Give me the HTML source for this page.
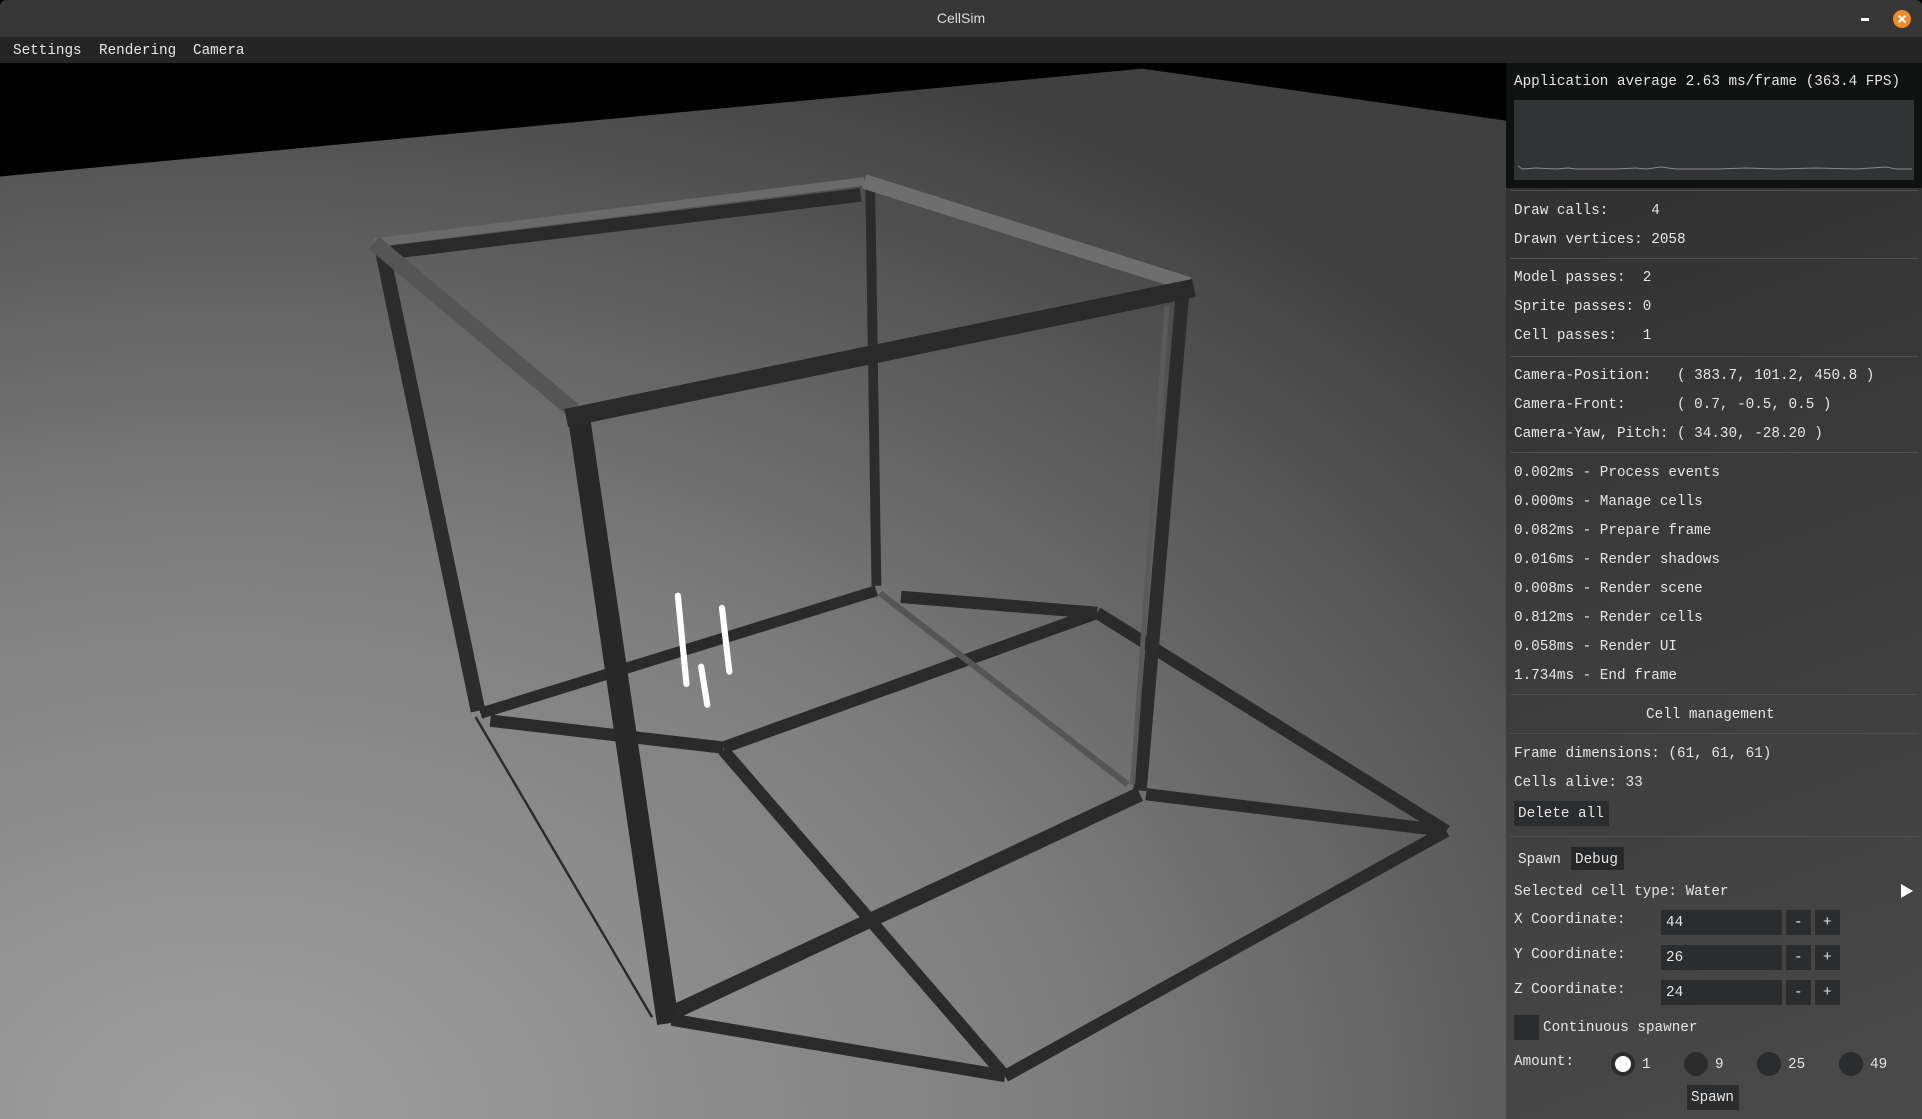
<!DOCTYPE html>
<html><head><meta charset="utf-8"><style>
*{margin:0;padding:0;box-sizing:border-box}
body{width:1922px;height:1119px;overflow:hidden;background:#000;font-family:"Liberation Mono","DejaVu Sans Mono",monospace;color:#e6e6e6;position:relative}
#title{position:absolute;left:0;top:0;width:1922px;height:37px;background:#363636;border-radius:6px 6px 0 0;text-align:center;line-height:37px;font-family:"Liberation Sans",sans-serif;font-size:14px;color:#ddd}
#menu{position:absolute;left:0;top:37px;width:1922px;height:26px;background:#242424;font-size:14.3px;line-height:28px}
#menu span{position:absolute;top:0}
svg.scene{position:absolute;left:0;top:0;width:1922px;height:1119px}
#panel{position:absolute;left:1506px;top:63px;width:416px;height:1056px;background:linear-gradient(160deg,#2e2e2e 0%,#3c3c3c 50%,#4a4a4a 100%);font-size:14.3px}
#hdr{position:absolute;left:0;top:0;width:416px;height:125px;background:#101111}
.t{position:absolute;left:8px;white-space:pre;line-height:16px}
.sep{position:absolute;left:4px;width:408px;height:1px;background:#4e4e58}
.box{position:absolute;background:#2b2c2e}
</style></head><body>
<svg class="scene" viewBox="0 0 1568 913" preserveAspectRatio="none">
<defs>
<radialGradient id="fl" cx="0.15" cy="1" r="1.1">
<stop offset="0" stop-color="#a0a0a0"/><stop offset="0.5" stop-color="#7e7e7e"/><stop offset="1" stop-color="#404040"/>
</radialGradient>
</defs>
<rect x="0" y="0" width="1568" height="913" fill="#000"/>
<polygon points="0,144 932,56 1240,100 1240,913 0,913" fill="url(#fl)"/>
<g stroke-linecap="butt" fill="none">
<g stroke="#2a2a2a" stroke-width="10">
<line x1="400" y1="588" x2="590" y2="610"/>
<line x1="590" y1="610" x2="895" y2="500"/>
<line x1="735" y1="487" x2="895" y2="500"/>
<line x1="895" y1="500" x2="1180" y2="678"/>
<line x1="1180" y1="678" x2="935" y2="648"/>
<line x1="590" y1="612" x2="820" y2="878"/>
<line x1="548" y1="832" x2="820" y2="878"/>
<line x1="820" y1="878" x2="1180" y2="678"/>
</g>
<line x1="388" y1="585" x2="532" y2="830" stroke="#2a2a2a" stroke-width="2"/>
<line x1="392" y1="582" x2="715" y2="482" stroke="#2a2a2a" stroke-width="9"/>
<line x1="718" y1="484" x2="920" y2="640" stroke="#555" stroke-width="5"/>
<line x1="930" y1="648" x2="545" y2="828" stroke="#2a2a2a" stroke-width="12"/>
<line x1="710" y1="155" x2="715" y2="478" stroke="#2c2c2c" stroke-width="8"/>
<line x1="312" y1="205" x2="390" y2="580" stroke="#2c2c2c" stroke-width="12"/>
<line x1="965" y1="236" x2="930" y2="645" stroke="#2c2c2c" stroke-width="11"/>
<line x1="952" y1="250" x2="924" y2="640" stroke="#5a5a5a" stroke-width="4"/>
<line x1="473" y1="345" x2="545" y2="835" stroke="#282828" stroke-width="18"/>
<line x1="305" y1="198" x2="705" y2="148" stroke="#6a6a6a" stroke-width="7"/>
<line x1="318" y1="206" x2="702" y2="159" stroke="#2a2a2a" stroke-width="11"/>
<line x1="705" y1="148" x2="970" y2="232" stroke="#6e6e6e" stroke-width="12"/>
<line x1="305" y1="198" x2="468" y2="335" stroke="#555" stroke-width="13"/>
<line x1="462" y1="341" x2="974" y2="235" stroke="#2a2a2a" stroke-width="15"/>
</g>
<g stroke="#fff" stroke-width="5" stroke-linecap="round">
<line x1="553" y1="486" x2="560" y2="558"/>
<line x1="589" y1="496" x2="595" y2="548"/>
<line x1="572" y1="544" x2="577" y2="575"/>
</g>
</svg>
<div id="title">CellSim</div>
<svg style="position:absolute;left:1860px;top:16px" width="12" height="6"><rect x="1" y="2" width="8" height="3" fill="#fff"/></svg>
<svg style="position:absolute;left:1893px;top:10px" width="18" height="18"><circle cx="9" cy="9" r="9" fill="#f08a24"/><path d="M5.5 5.5L12.5 12.5M12.5 5.5L5.5 12.5" stroke="#fff" stroke-width="2"/></svg>
<div id="menu"><span style="left:13px">Settings</span><span style="left:99px">Rendering</span><span style="left:193px">Camera</span></div>
<div id="panel">
<div id="hdr"></div>
<div class="t" style="top:11px">Application average 2.63 ms/frame (363.4 FPS)</div>
<div class="box" style="left:8px;top:37px;width:400px;height:80px;background:#323335"></div>
<svg style="position:absolute;left:10px;top:100px" width="398" height="10"><polyline points="2,3 6,6 20,5 40,6 52,5 60,6 100,6 120,5 130,6 145,4 160,6 200,6 230,5 260,6 300,5 340,6 370,4 380,6 396,6" fill="none" stroke="#8a8a8a" stroke-width="1"/></svg>
<div class="sep" style="top:127px"></div>
<div class="t" style="top:140px">Draw calls:     4</div>
<div class="t" style="top:169px">Drawn vertices: 2058</div>
<div class="sep" style="top:195px"></div>
<div class="t" style="top:207px">Model passes:  2</div>
<div class="t" style="top:236px">Sprite passes: 0</div>
<div class="t" style="top:265px">Cell passes:   1</div>
<div class="sep" style="top:293px"></div>
<div class="t" style="top:305px">Camera-Position:   ( 383.7, 101.2, 450.8 )</div>
<div class="t" style="top:334px">Camera-Front:      ( 0.7, -0.5, 0.5 )</div>
<div class="t" style="top:363px">Camera-Yaw, Pitch: ( 34.30, -28.20 )</div>
<div class="sep" style="top:389px"></div>
<div class="t" style="top:402px">0.002ms - Process events</div>
<div class="t" style="top:431px">0.000ms - Manage cells</div>
<div class="t" style="top:460px">0.082ms - Prepare frame</div>
<div class="t" style="top:489px">0.016ms - Render shadows</div>
<div class="t" style="top:518px">0.008ms - Render scene</div>
<div class="t" style="top:547px">0.812ms - Render cells</div>
<div class="t" style="top:576px">0.058ms - Render UI</div>
<div class="t" style="top:605px">1.734ms - End frame</div>
<div class="sep" style="top:631px"></div>
<div class="t" style="top:644px;left:140px">Cell management</div>
<div class="sep" style="top:670px"></div>
<div class="t" style="top:683px">Frame dimensions: (61, 61, 61)</div>
<div class="t" style="top:712px">Cells alive: 33</div>
<div class="box" style="left:8px;top:738px;width:95px;height:25px"></div>
<div class="t" style="top:743px;left:12px">Delete all</div>
<div class="sep" style="top:773px"></div>
<div class="t" style="top:789px;left:12px">Spawn</div>
<div class="box" style="left:65px;top:784px;width:53px;height:23px;background:#262729"></div>
<div class="t" style="top:789px;left:69px">Debug</div>
<div class="t" style="top:821px">Selected cell type: Water</div>
<svg style="position:absolute;left:394px;top:820px" width="14" height="16"><path d="M1 1L13 8L1 15Z" fill="#fff"/></svg>
<div class="t" style="top:849px">X Coordinate:</div>
<div class="box" style="left:155px;top:847px;width:121px;height:25px"></div><div class="t" style="top:852px;left:160px">44</div>
<div class="box" style="left:280px;top:847px;width:25px;height:25px"></div><div class="t" style="top:852px;left:288px">-</div>
<div class="box" style="left:309px;top:847px;width:25px;height:25px"></div><div class="t" style="top:852px;left:317px">+</div>
<div class="t" style="top:884px">Y Coordinate:</div>
<div class="box" style="left:155px;top:882px;width:121px;height:25px"></div><div class="t" style="top:887px;left:160px">26</div>
<div class="box" style="left:280px;top:882px;width:25px;height:25px"></div><div class="t" style="top:887px;left:288px">-</div>
<div class="box" style="left:309px;top:882px;width:25px;height:25px"></div><div class="t" style="top:887px;left:317px">+</div>
<div class="t" style="top:919px">Z Coordinate:</div>
<div class="box" style="left:155px;top:917px;width:121px;height:25px"></div><div class="t" style="top:922px;left:160px">24</div>
<div class="box" style="left:280px;top:917px;width:25px;height:25px"></div><div class="t" style="top:922px;left:288px">-</div>
<div class="box" style="left:309px;top:917px;width:25px;height:25px"></div><div class="t" style="top:922px;left:317px">+</div>
<div class="box" style="left:8px;top:952px;width:25px;height:25px"></div>
<div class="t" style="top:957px;left:37px">Continuous spawner</div>
<div class="t" style="top:991px">Amount:</div>
<svg style="position:absolute;left:104px;top:988px" width="300" height="26">
<circle cx="13" cy="13" r="12" fill="#2b2c2e"/><circle cx="13" cy="13" r="8" fill="#fff"/>
<circle cx="86" cy="13" r="12" fill="#2b2c2e"/>
<circle cx="159" cy="13" r="12" fill="#2b2c2e"/>
<circle cx="241" cy="13" r="12" fill="#2b2c2e"/>
</svg>
<div class="t" style="top:994px;left:136px">1</div>
<div class="t" style="top:994px;left:209px">9</div>
<div class="t" style="top:994px;left:282px">25</div>
<div class="t" style="top:994px;left:364px">49</div>
<div class="box" style="left:181px;top:1022px;width:52px;height:25px"></div>
<div class="t" style="top:1027px;left:185px">Spawn</div>
</div>
</body></html>
